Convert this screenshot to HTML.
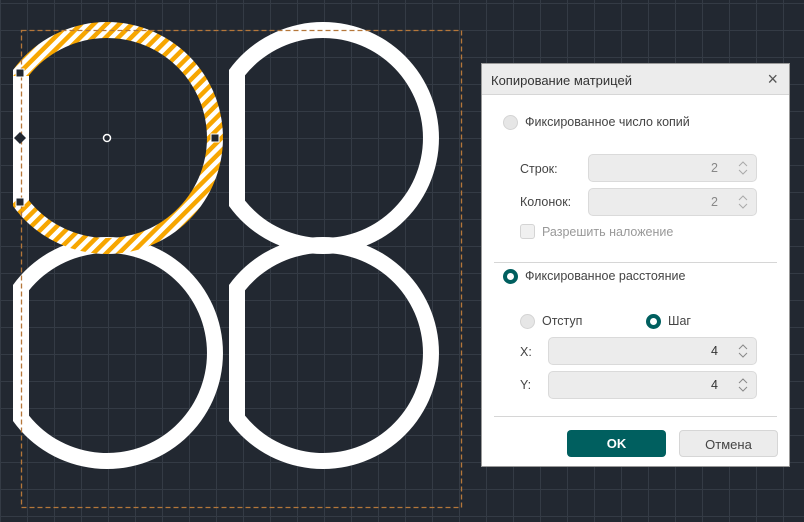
<!DOCTYPE html>
<html><head><meta charset="utf-8"><style>
*{box-sizing:border-box;margin:0;padding:0}
body{width:804px;height:522px;overflow:hidden;background:#222831;font-family:"Liberation Sans",sans-serif;position:relative}
.grid{position:absolute;inset:0;background-image:linear-gradient(to right,#343b45 1px,transparent 1px),linear-gradient(to bottom,#343b45 1px,transparent 1px);background-size:27px 27px;background-position:0 3px}
.dlg{position:absolute;left:481px;top:63px;width:309px;height:404px;background:#fff;border:1px solid #999}
.hd{height:31px;background:#ececec;border-bottom:1px solid #d6d6d6;font-size:13px;color:#333;padding:9px 0 0 9px;position:relative}
.hd .x{position:absolute;right:11px;top:5px;font-size:18px;color:#555}
.t{position:absolute;font-size:12.5px;color:#444}
.dim{color:#999}
.rad{position:absolute;width:15px;height:15px;border-radius:50%;background:#e6e6e6;border:1px solid #d4d4d4}
.rad.on{background:#fff;border:4px solid #005f5f}
.inp{position:absolute;background:#ececec;border:1px solid #dadada;border-radius:5px;height:28px;font-size:12.5px;text-align:right;padding:6px 38px 0 0;color:#888}
.inp.dk{color:#333}
.ar{position:absolute;right:8px;top:6px}
.hr{position:absolute;left:12px;right:12px;height:1px;background:#d6d6d6}
.btn{position:absolute;height:27px;border-radius:4px;font-size:13px;text-align:center;padding-top:6px}
</style></head><body>
<div class="grid"></div>
<svg width="804" height="522" style="position:absolute;left:0;top:0">
<defs><pattern id="st" width="9" height="9" patternUnits="userSpaceOnUse" patternTransform="rotate(45)"><rect width="9" height="9" fill="#fff"/><rect width="4.5" height="9" fill="#f7a600"/></pattern>
<path id="sh" d="M13,70 A116,116 0 1 1 13,206 Z M29,75.4 A100,100 0 1 1 29,200.6 Z" fill-rule="evenodd"/></defs>
<use href="#sh" x="216" fill="#fff"/>
<use href="#sh" y="215" fill="#fff"/>
<use href="#sh" x="216" y="215" fill="#fff"/>
<use href="#sh" fill="url(#st)"/>
<rect x="13" y="76" width="16" height="124" fill="#fff"/>
<rect x="21.5" y="30.5" width="440" height="477" fill="none" stroke="#b5773a" stroke-width="1.3" stroke-dasharray="5,3"/>
<rect x="16" y="69" width="8" height="8" fill="#222831" stroke="#fff"/>
<rect x="16" y="198" width="8" height="8" fill="#222831" stroke="#fff"/>
<rect x="211" y="134" width="8" height="8" fill="#222831" stroke="#fff"/>
<path d="M20,132 L26,138 L20,144 L14,138Z" fill="#222831"/>
<circle cx="107" cy="138" r="3.5" fill="#222831" stroke="#fff" stroke-width="1.5"/>
</svg>
<div class="dlg">
<div class="hd">Копирование матрицей<span class="x">×</span></div>
<div class="rad" style="left:21px;top:51px"></div><div class="t" style="left:43px;top:51px">Фиксированное число копий</div>
<div class="t" style="left:38px;top:98px">Строк:</div>
<div class="inp" style="left:106px;top:90px;width:169px">2<svg class="ar" width="10" height="14"><path d="M1,5 L5,1 L9,5 M1,9 L5,13 L9,9" fill="none" stroke="#aaa"/></svg></div>
<div class="t" style="left:38px;top:131px">Колонок:</div>
<div class="inp" style="left:106px;top:124px;width:169px">2<svg class="ar" width="10" height="14"><path d="M1,5 L5,1 L9,5 M1,9 L5,13 L9,9" fill="none" stroke="#aaa"/></svg></div>
<div style="position:absolute;left:38px;top:160px;width:15px;height:15px;border:1px solid #d4d4d4;border-radius:3px;background:#f0f0f0"></div>
<div class="t dim" style="left:60px;top:161px">Разрешить наложение</div>
<div class="hr" style="top:198px"></div>
<div class="rad on" style="left:21px;top:205px"></div><div class="t" style="left:43px;top:205px">Фиксированное расстояние</div>
<div class="rad" style="left:38px;top:250px"></div><div class="t" style="left:60px;top:250px">Отступ</div>
<div class="rad on" style="left:164px;top:250px"></div><div class="t" style="left:186px;top:250px">Шаг</div>
<div class="t" style="left:38px;top:281px">X:</div>
<div class="inp dk" style="left:66px;top:273px;width:209px">4<svg class="ar" width="10" height="14"><path d="M1,5 L5,1 L9,5 M1,9 L5,13 L9,9" fill="none" stroke="#888"/></svg></div>
<div class="t" style="left:38px;top:314px">Y:</div>
<div class="inp dk" style="left:66px;top:307px;width:209px">4<svg class="ar" width="10" height="14"><path d="M1,5 L5,1 L9,5 M1,9 L5,13 L9,9" fill="none" stroke="#888"/></svg></div>
<div class="hr" style="top:352px"></div>
<div class="btn" style="left:85px;top:366px;width:99px;background:#005f5f;color:#fff;font-weight:bold">OK</div>
<div class="btn" style="left:197px;top:366px;width:99px;background:#ececec;border:1px solid #d6d6d6;color:#444">Отмена</div>
</div>
</body></html>
